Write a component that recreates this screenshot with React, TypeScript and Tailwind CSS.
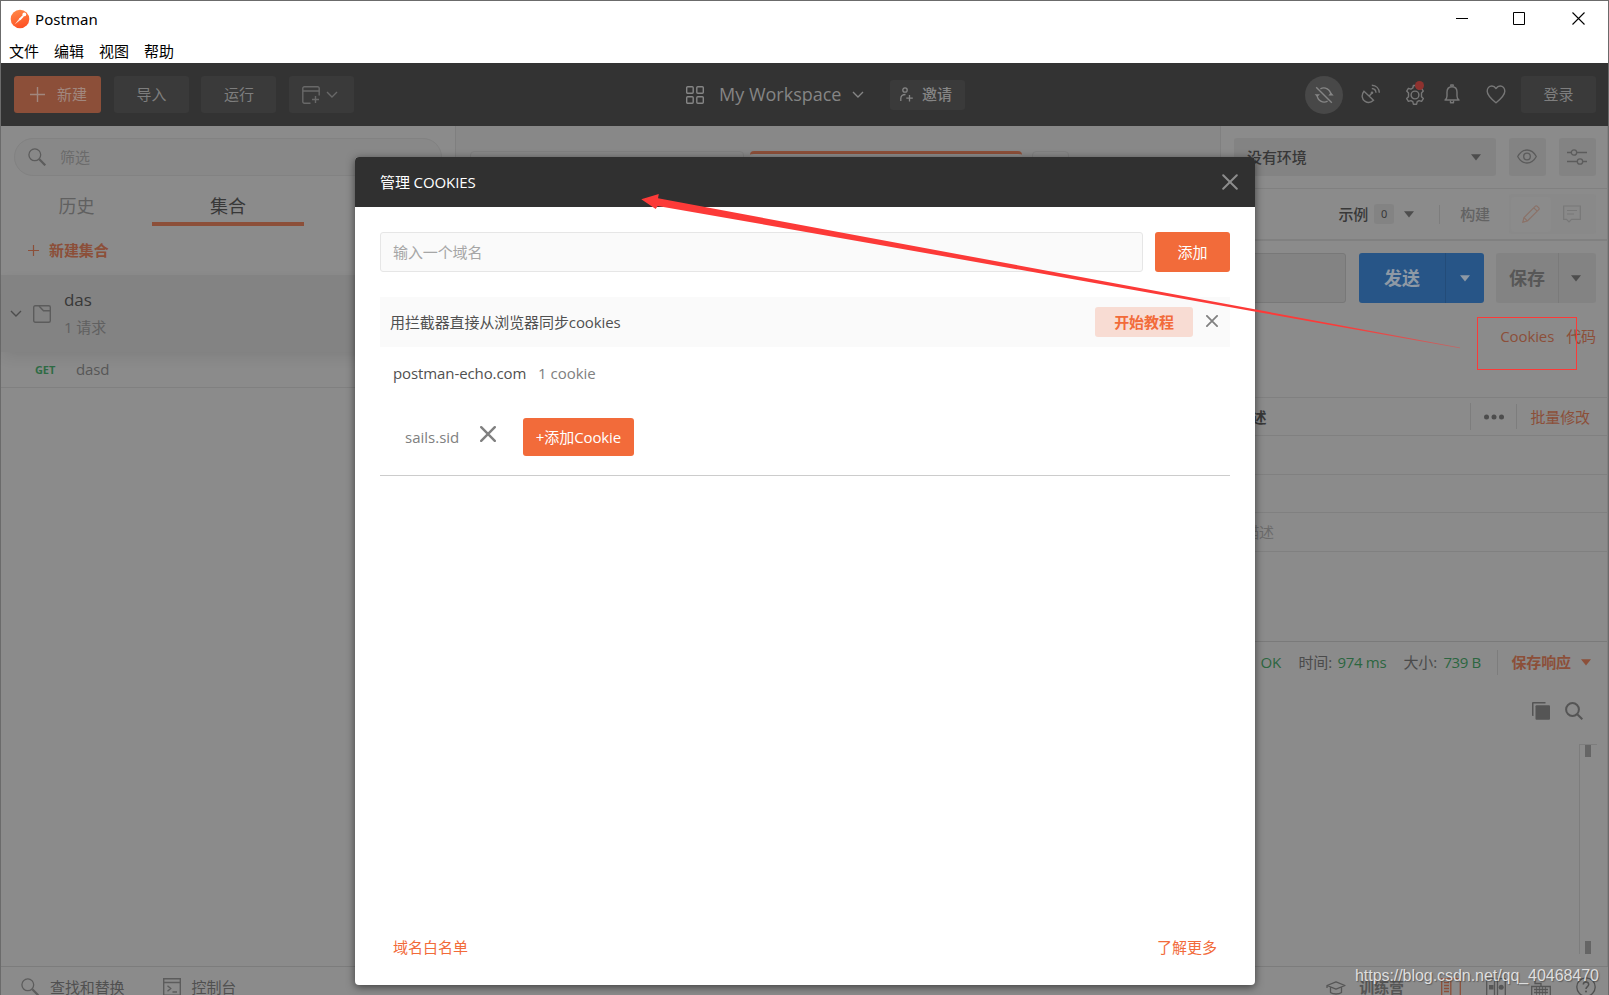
import React from "react";

const FONT = "font-['Open_Sans','Noto_Sans_CJK_SC',sans-serif] tracking-[-0.1px]";

function Caret({ className = "" }: { className?: string }) {
  return (
    <svg width="10" height="7" viewBox="0 0 10 7" className={`shrink-0 ${className}`} fill="currentColor">
      <path d="M0 0.3h10L5 6.5z" />
    </svg>
  );
}

function Chevron({ className = "" }: { className?: string }) {
  return (
    <svg width="12" height="8" viewBox="0 0 12 8" className={`shrink-0 ${className}`} fill="none" stroke="currentColor" strokeWidth="1.4">
      <path d="M1 1l5 5 5-5" />
    </svg>
  );
}

function Cross({ size, stroke, className = "" }: { size: number; stroke: number; className?: string }) {
  return (
    <svg width={size} height={size} viewBox="0 0 16 16" className={`shrink-0 ${className}`} fill="none" stroke="currentColor" strokeWidth={stroke} strokeLinecap="round">
      <path d="M1.2 1.2l13.6 13.6M14.8 1.2L1.2 14.8" />
    </svg>
  );
}

function TitleBar() {
  return (
    <div className="flex h-9 shrink-0 items-center bg-white">
      <svg width="20" height="20" viewBox="0 0 20 20" className="ml-[9px] shrink-0">
        <defs>
          <linearGradient id="logo" x1="0" y1="0" x2="0.3" y2="1">
            <stop offset="0" stopColor="#ff8c4a" />
            <stop offset="1" stopColor="#ff5426" />
          </linearGradient>
        </defs>
        <circle cx="10" cy="10" r="9.3" fill="url(#logo)" />
        <path d="M4.6 15.5l5-6.3 1.4 1.4z" fill="#fff" opacity="0.85" />
        <path d="M9 9.8l3.6-3.6 1.3 1.3-3.5 3.7z" fill="#fff" />
        <circle cx="14.3" cy="5.4" r="1.9" fill="#fff" />
      </svg>
      <span className="ml-[5px] font-['Noto_Sans',sans-serif] text-[15px] leading-5 tracking-[0.05px] text-black">Postman</span>
      <div className="ml-auto mr-[23px] flex items-center gap-[45px] pb-px">
        <svg width="12" height="13" viewBox="0 0 12 13"><path d="M0 6.5h12" stroke="#000" /></svg>
        <svg width="13" height="13" viewBox="0 0 13 13" className="mr-[1px]"><path d="M.5.5h11v12H.5z" fill="none" stroke="#000" /></svg>
        <svg width="13" height="13" viewBox="0 0 13 13"><path d="M.5.5l12 12M12.5.5l-12 12" fill="none" stroke="#000" strokeWidth="1.1" /></svg>
      </div>
    </div>
  );
}

function MenuBar() {
  return (
    <div className="flex h-[26px] shrink-0 items-center gap-[15px] bg-white pl-2 pt-px text-[15px] leading-5 tracking-normal text-black">
      <span>文件</span>
      <span>编辑</span>
      <span>视图</span>
      <span>帮助</span>
    </div>
  );
}

function HeaderIcons() {
  return (
    <>
      <div className="flex size-[38px] items-center justify-center rounded-full bg-[#484848] text-[#858585]">
        <svg width="20" height="18" viewBox="0 0 20 18" fill="none" stroke="currentColor" strokeWidth="1.4">
          <path d="M6.4 2.8A7 7 0 0 1 16.8 8.6M13.6 15.2A7 7 0 0 1 3.2 9.2" />
          <path d="M.6 8.2h5.4L3.3 11z M14.3 9.4h5.4L17 6.4z" fill="currentColor" stroke="none" />
          <path d="M2.2 1.2l15.6 15.6" />
        </svg>
      </div>
      <svg width="20" height="20" viewBox="0 0 20 20" className="mb-px ml-[18px] text-[#777]" fill="none" stroke="currentColor" strokeWidth="1.4">
        <path d="M3 7.2c-3 3.800-2 8 .8 10 3 2 6.500 1.300 8.700-.9z" />
        <path d="M8 12.200l3-3.200" />
        <circle cx="11" cy="8.800" r="1.300" fill="currentColor" stroke="none" />
        <path d="M10.800 4.500c2.500.1 4 1.800 4.200 4.300M10.800 1.200c4.500.1 7.300 3.300 7.500 7.500" />
      </svg>
      <div className="relative mb-px ml-6">
        <svg width="20" height="21" viewBox="0 0 20 21" className="text-[#777]" fill="none" stroke="currentColor" strokeWidth="1.400" strokeLinejoin="round">
          <circle cx="10" cy="11" r="3.900" />
          <path d="M8.400 1.500h3.200l.6 2.500 1.900 1.100 2.500-.8 1.700 2.800-1.800 1.900v3.700l1.800 1.900-1.700 2.800-2.500-.8-1.900 1.100-.6 2.500H8.400l-.6-2.500-1.900-1.100-2.500.8-1.700-2.800 1.800-1.900V9L1.700 7.100l1.700-2.800 2.500.8L7.800 4z" />
        </svg>
        <span className="absolute -top-[3px] right-[1px] size-[9px] rounded-full bg-[#8e322f]" />
      </div>
      <svg width="16" height="20" viewBox="0 0 16 20" className="mb-px ml-[19px] text-[#777]" fill="none" stroke="currentColor" strokeWidth="1.400" strokeLinejoin="round">
        <path d="M1 16c1.400-1 2-2 2-4V8c0-3.200 2-5.300 5-5.300S13 4.800 13 8v4c0 2 .6 3 2 4z" />
        <path d="M6.800 2.500V1h2.400v1.500M6.500 16.500v2.300h3v-2.300" />
      </svg>
      <svg width="20" height="19" viewBox="0 0 20 19" className="mb-px ml-[26px] text-[#777]" fill="none" stroke="currentColor" strokeWidth="1.400" strokeLinejoin="round">
        <path d="M10 17.800C6.500 15 1.200 10.800 1.200 6.300 1.200 3.300 3.200 1 5.800 1 7.700 1 9 2 10 3.500 11 2 12.300 1 14.200 1c2.600 0 4.600 2.300 4.600 5.300 0 4.500-5.300 8.700-8.800 11.500z" />
      </svg>
    </>
  );
}

function Header() {
  return (
    <div className="grid h-[63px] shrink-0 grid-cols-[1fr_auto_1fr] items-center bg-[#333] pl-[13px] pr-3 text-[15px] text-[#7e7e7e]">
      <div className="flex items-center">
        <div className="flex h-[37px] w-[87px] items-center rounded-[3px] bg-[#8c4f39] pl-4 text-[#a1877e]">
          <svg width="15" height="15" viewBox="0 0 15 15" stroke="currentColor" strokeWidth="1.4"><path d="M7.500 0v15M0 7.500h15" /></svg>
          <span className="ml-3">新建</span>
        </div>
        <div className="ml-[13px] flex h-[37px] w-[75px] items-center justify-center rounded-[3px] bg-[#3a3a3a]">导入</div>
        <div className="ml-3 flex h-[37px] w-[75px] items-center justify-center rounded-[3px] bg-[#3a3a3a] pl-px">运行</div>
        <div className="ml-[13px] flex h-[37px] w-[65px] items-center rounded-[3px] bg-[#3a3a3a] pl-[13px] text-[#686868]">
          <svg width="18" height="18" viewBox="0 0 18 18" fill="none" stroke="currentColor" strokeWidth="1.400">
            <path d="M8.500 17.200H2.300A1.500 1.500 0 0 1 .8 15.700V2.300A1.500 1.500 0 0 1 2.300.8h13.400a1.500 1.500 0 0 1 1.500 1.500v7.200M.8 5h16.400M13.500 10v7M10 13.500h7" />
          </svg>
          <Chevron className="ml-1.5" />
        </div>
      </div>
      <div className="ml-[41px] flex items-center text-[#858585]">
        <svg width="18" height="18" viewBox="0 0 18 18" fill="none" stroke="currentColor" strokeWidth="1.400">
          <rect x=".7" y=".7" width="6.500" height="6.500" rx="1" />
          <rect x="10.800" y=".7" width="6.500" height="6.500" rx="1" />
          <rect x=".7" y="10.800" width="6.500" height="6.500" rx="1" />
          <rect x="10.800" y="10.800" width="6.500" height="6.500" rx="1" />
        </svg>
        <span className="ml-[15px] w-[121px] whitespace-nowrap text-[18px] tracking-normal">My Workspace</span>
        <Chevron className="ml-[12px]" />
        <div className="ml-[26px] flex h-[30px] w-[75px] items-center rounded-[3px] bg-[#3a3a3a] pl-[10px]">
          <svg width="13" height="15" viewBox="0 0 13 15" fill="none" stroke="currentColor" strokeWidth="1.300">
            <circle cx="5" cy="3" r="2.200" />
            <path d="M.8 14v-2.500C.8 9 2.500 7.500 5.500 7.500M9.500 8v6.500M6.300 11.200h6.500" />
          </svg>
          <span className="ml-[9px] font-medium">邀请</span>
        </div>
      </div>
      <div className="flex items-center justify-end">
        <HeaderIcons />
        <div className="ml-[15px] flex h-[37px] w-[75px] items-center justify-center rounded-[3px] bg-[#3a3a3a]">登录</div>
      </div>
    </div>
  );
}

function Sidebar() {
  return (
    <div className="flex w-[455px] shrink-0 flex-col border-r border-[#7f7f7f]">
      <div className="ml-[13px] mt-3 flex h-[38px] w-[428px] shrink-0 items-center rounded-full border border-[#828282] bg-[#888] pl-[13px]">
        <svg width="18" height="18" viewBox="0 0 18 18" fill="none" stroke="#5c5c5c">
          <circle cx="6.800" cy="6.800" r="5.900" strokeWidth="1.300" />
          <path d="M11.300 11.300l6 6" strokeWidth="2.200" />
        </svg>
        <span className="ml-[14px] text-[15px] text-[#6b6b6b]">筛选</span>
      </div>
      <div className="flex h-[50px] shrink-0 text-center text-[18px] leading-[60px]">
        <div className="w-[151px] text-[#606060]">历史</div>
        <div className="w-[152px] border-b-4 border-[#8c4f39] text-[#383838]">集合</div>
      </div>
      <div className="flex h-[49px] shrink-0 items-center pl-[27px] text-[15px] font-bold text-[#8c4f39]">
        <svg width="11" height="11" viewBox="0 0 11 11" stroke="currentColor" strokeWidth="1.200"><path d="M5.500 0v11M0 5.500h11" /></svg>
        <span className="ml-[10px]">新建集合</span>
      </div>
      <div className="relative z-10 flex h-[77px] shrink-0 items-center bg-[#838383] pl-[9px] shadow-[0_6px_14px_-2px_rgba(0,0,0,0.09)]">
        <Chevron className="text-[#4d4d4d]" />
        <svg width="18" height="18" viewBox="0 0 18 18" className="ml-[11px]" fill="none" stroke="#5c5c5c" strokeWidth="1.400">
          <rect x=".7" y=".7" width="16.600" height="16.600" rx="1.500" />
          <path d="M6 1l4.500 4.800h6.500" />
        </svg>
        <div className="ml-[13px] flex flex-col text-[#383838]">
          <span className="text-[17px] leading-[26px]">das</span>
          <span className="text-[15px] leading-[28px] text-[#606060]">1 请求</span>
        </div>
      </div>
      <div className="flex h-9 shrink-0 items-center border-b border-[#808080] pl-[34px]">
        <span className="w-[41px] pt-px text-[11px] font-bold text-[#2f6b45]">GET</span>
        <span className="text-[15px] text-[#575757]">dasd</span>
      </div>
    </div>
  );
}

function TopTabs() {
  return (
    <div className="flex h-[63px] shrink-0 border-b border-[#808080]">
      <div className="flex w-[764px] shrink-0 items-start gap-[6px] bg-[#888] pl-[14px] pt-[25px]">
        <div className="h-[37px] w-[274px] rounded-t border border-[#808080]" />
        <div className="h-[37px] w-[272px] rounded-t border-t-[3px] border-[#8c4f39] bg-[#8b8b8b]" />
        <div className="ml-[4px] h-[37px] w-[37px] rounded-t border border-[#808080]" />
      </div>
      <div className="flex flex-1 items-start border-l border-[#808080] pl-[13px] pt-3">
        <div className="flex h-[38px] w-[262px] items-center rounded-[3px] bg-[#838383] pl-[13px] pr-[15px] text-[15px] font-medium text-[#383838]">
          <span>没有环境</span>
          <Caret className="ml-auto text-[#4d4d4d]" />
        </div>
        <div className="ml-[13px] flex h-[38px] w-[37px] items-center justify-center rounded-[3px] bg-[#838383] pb-px pr-px text-[#5c5c5c]">
          <svg width="20" height="15" viewBox="0 0 20 15" fill="none" stroke="currentColor" strokeWidth="1.300">
            <path d="M.7 7.500C3 3.200 6.300 1 10 1s7 2.200 9.300 6.500C17 11.800 13.700 14 10 14S3 11.800.7 7.500z" />
            <circle cx="10" cy="7.500" r="3.300" />
          </svg>
        </div>
        <div className="ml-[13px] flex h-[38px] w-[37px] items-center justify-center rounded-[3px] bg-[#838383] pr-px text-[#5c5c5c]">
          <svg width="20" height="16" viewBox="0 0 20 16" fill="none" stroke="currentColor" strokeWidth="1.300">
            <path d="M0 3.500h4.200M9.800 3.500H20M0 12.500h10.200M15.800 12.500H20" />
            <circle cx="7" cy="3.500" r="2.700" />
            <circle cx="13" cy="12.500" r="2.700" />
          </svg>
        </div>
      </div>
    </div>
  );
}

function RequestArea() {
  return (
    <>
      <div className="flex h-[52px] shrink-0 items-center justify-end border-b-2 border-[#808080] pr-[11px] text-[15px]">
        <span className="font-medium text-[#383838]">示例</span>
        <span className="ml-[6px] flex h-5 w-5 items-center justify-center rounded-[3px] bg-[#838383] font-['Noto_Sans',sans-serif] text-[11px] text-[#383838]">0</span>
        <Caret className="ml-[10px] text-[#4d4d4d]" />
        <span className="ml-[25px] h-[19px] w-px bg-[#7d7d7d]" />
        <span className="ml-5 pt-px font-medium text-[#636363]">构建</span>
        <div className="ml-[19px] flex h-[40px] w-[87px] items-center rounded-[3px] bg-[#898989] pl-[2px]">
          <div className="flex h-[35px] w-[40px] items-center justify-center rounded-[3px] bg-[#8b8b8b] text-[#8b7268]">
            <svg width="18" height="18" viewBox="0 0 18 18" fill="none" stroke="currentColor" strokeWidth="1.200"><path d="M.8 17.200l1.200-4.600L13.400 1.200c.5-.5 1.200-.5 1.700 0l1.700 1.700c.5.5.5 1.200 0 1.700L5.400 16zM11.800 2.800l3.400 3.400M2 12.600L5.400 16" /></svg>
          </div>
          <svg width="18" height="18" viewBox="0 0 18 18" className="ml-3" fill="none" stroke="#787878" strokeWidth="1.200"><path d="M.7 1h16.600v13.300H8.500L6 16.800l-2.500-2.500H.7zM4 5.500h10M4 9h7" /></svg>
        </div>
      </div>

      <div className="flex h-[75px] shrink-0 items-start pl-[14px] pr-[11px] pt-3">
        <div className="h-[50px] w-[876px] rounded-[3px] border border-[#787878] bg-[#838383]" />
        <div className="ml-[13px] flex h-[50px] w-[125px] rounded-[3px] bg-[#275587] text-[18px] font-bold text-[#8e99a5]">
          <span className="flex w-[86px] items-center justify-center pt-px">发送</span>
          <span className="flex flex-1 items-center justify-center border-l border-[#234c79] pr-px"><Caret /></span>
        </div>
        <div className="ml-[12px] flex h-[50px] w-[100px] rounded-[3px] bg-[#838383] text-[18px] font-bold text-[#575757]">
          <span className="flex w-[62px] items-center justify-center pt-px">保存</span>
          <span className="flex flex-1 items-center justify-center border-l border-[#7a7a7a] pr-1"><Caret className="text-[#4d4d4d]" /></span>
        </div>
      </div>

      <div className="flex h-[82px] shrink-0 items-start justify-end border-b border-[#808080] pr-[11px] pt-[9px] text-[15px] text-[#8c4f39]">
        <span className="w-[66px]">Cookies</span>
        <span>代码</span>
      </div>

      <div className="flex h-[38px] shrink-0 items-center justify-end border-b border-[#808080] pr-[17px] text-[15px]">
        <span className="mr-[204px] pt-px font-bold text-[#383838]">描述</span>
        <span className="h-[27px] w-px bg-[#7d7d7d]" />
        <svg width="20" height="6" viewBox="0 0 20 6" className="ml-[13px]" fill="#4d4d4d"><circle cx="2.500" cy="3" r="2.500" /><circle cx="10" cy="3" r="2.500" /><circle cx="17.500" cy="3" r="2.500" /></svg>
        <span className="ml-3 h-[25px] w-px bg-[#7d7d7d]" />
        <span className="ml-[13px] pt-0.5 text-[#8c4f39]">批量修改</span>
      </div>
      <div className="h-[39px] shrink-0 border-b border-[#808080]" />
      <div className="h-[38px] shrink-0 border-b border-[#808080]" />
      <div className="flex h-[39px] shrink-0 items-center justify-end border-b border-[#808080] pr-[333px] text-[15px] text-[#6b6b6b]">描述</div>
      <div className="h-[89px] shrink-0" />

      <div className="flex h-[41px] shrink-0 items-center justify-end border-t border-[#7a7a7a] pr-[16px] text-[15px] text-[#4a4a4a]">
        <span className="w-[38px] text-[#2c6640]">OK</span>
        <span className="w-[39px]">时间:</span>
        <span className="w-[66px] tracking-[-0.3px] text-[#2c6640]">974 ms</span>
        <span className="w-[40px]">大小:</span>
        <span className="w-[54px] tracking-[-0.4px] text-[#2c6640]">739 B</span>
        <span className="h-[25px] w-px bg-[#7d7d7d]" />
        <span className="ml-[13px] font-bold text-[#8c4f39]">保存响应</span>
        <Caret className="ml-[10px] text-[#8c4f39]" />
      </div>

      <div className="flex h-[62px] shrink-0 justify-end gap-[15px] pr-[24px] pt-5 text-[#555]">
        <svg width="18" height="18" viewBox="0 0 18 18" fill="currentColor"><path d="M13.500 0v1.500H1.500V14H.8a.8.800 0 0 1-.8-.8V1A1 1 0 0 1 1 0z" /><rect x="3.500" y="3.300" width="14.500" height="14.500" rx="1" /></svg>
        <svg width="18" height="18" viewBox="0 0 18 18" fill="none" stroke="currentColor" strokeWidth="2"><circle cx="7.500" cy="7.500" r="6.400" /><path d="M12 12l5.300 5.300" /></svg>
      </div>

      <div className="ml-auto mr-[10px] flex h-[210px] w-[18px] shrink-0 flex-col items-start justify-between border-l border-t border-[#7d7d7d] pl-[5px]">
        <span className="h-3 w-1.5 bg-[#656565]" />
        <span className="h-[13px] w-1.5 bg-[#656565]" />
      </div>
    </>
  );
}

function StatusBar() {
  return (
    <div className="flex h-[29px] shrink-0 items-start overflow-hidden border-t border-[#7c7c7c] pl-5 pr-3 text-[15px] text-[#505050]">
      <svg width="18" height="18" viewBox="0 0 18 18" className="mt-[11px] shrink-0" fill="none" stroke="#5c5c5c"><circle cx="6.800" cy="6.800" r="5.900" strokeWidth="1.300" /><path d="M11.300 11.300l6 6" strokeWidth="2.200" /></svg>
      <span className="ml-[11px] mt-[9px] leading-[22px]">查找和替换</span>
      <svg width="18" height="18" viewBox="0 0 18 18" className="ml-[38px] mt-[11px] shrink-0" fill="none" stroke="#5c5c5c" strokeWidth="1.400"><path d="M.7.7h16.600v16.600H.7zM.7 4.500h16.600M4.500 7.800l3.200 2.700-3.200 2.700M9.500 14h4.500" /></svg>
      <span className="ml-[11px] mt-[9px] leading-[22px]">控制台</span>
      <div className="ml-auto flex items-start">
        <svg width="20" height="14" viewBox="0 0 20 14" className="mt-[14px]" fill="none" stroke="#565656" strokeWidth="1.300" strokeLinejoin="round"><path d="M10 .8L1 4.500 10 8.200l9-3.700zM4.500 6v5.500c2.500 2 8.500 2 11 0V6M1 4.500V7" /></svg>
        <span className="ml-[13px] mt-[9px] font-bold leading-[22px] text-[#555]">训练营</span>
        <svg width="20" height="20" viewBox="0 0 20 20" className="ml-[37px] mt-[11px]" fill="none" stroke="#8c4f39" strokeWidth="1.300"><path d="M.7.7h18.600v18.600H.7zM9.800.7v18.600M3 4.500h5M3 7.500h5M3 10.500h5M3 13.500h5" /></svg>
        <svg width="20" height="20" viewBox="0 0 20 20" className="ml-[25px] mt-[11px]" fill="none" stroke="#565656" strokeWidth="1.300"><path d="M.7.7h7.800v18.600H.7zM11.500.7h7.800v18.600h-7.800z" /><path d="M3 7h4.500v4.500H3z" fill="#565656" stroke="none" /><circle cx="15.200" cy="9.300" r="2.500" fill="#565656" stroke="none" /></svg>
        <svg width="20" height="20" viewBox="0 0 20 20" className="ml-[25px] mt-[11px]" fill="none" stroke="#565656" strokeWidth="1.300"><path d="M.7 8.500h18.600v11H.7zM10 8V5.500H4V2M3 11.500h14M3 14.500h14" /><path d="M5.500 9v10M8.500 9v10M11.500 9v10M14.500 9v10" strokeWidth=".8" /></svg>
        <svg width="20" height="20" viewBox="0 0 20 20" className="ml-[25px] mt-[10px]" fill="none" stroke="#505050" strokeWidth="1.300"><circle cx="10" cy="10" r="9.200" /><path d="M7.300 7.500c0-3.500 5.400-3.500 5.400 0 0 2-2.700 2.200-2.700 4.500" strokeWidth="1.500" /><circle cx="10" cy="14.500" r="1" fill="#505050" stroke="none" /></svg>
      </div>
    </div>
  );
}

function CookiesModal() {
  return (
    <div className="absolute left-[355px] top-[157px] z-20 flex h-[828px] w-[900px] flex-col overflow-hidden rounded-[4px] bg-white text-[15px] shadow-[0_2px_8px_rgba(0,0,0,0.55)]">
      <div className="flex h-[50px] shrink-0 items-center justify-between bg-[#303030] pl-[25px] pr-[17px] text-white">
        <span>管理 COOKIES</span>
        <Cross size={16} stroke={2} className="text-[#8c8c8c]" />
      </div>
      <div className="flex flex-1 flex-col px-[25px]">
        <div className="mt-[25px] flex gap-3">
          <div className="flex h-10 flex-1 items-center rounded-[3px] border border-[#e6e6e6] bg-[#fafafa] pl-3 text-[#a6a6a6]">输入一个域名</div>
          <div className="flex h-10 w-[75px] items-center justify-center rounded-[3px] bg-[#f26b3a] text-white">添加</div>
        </div>
        <div className="mt-[25px] flex h-[50px] items-center bg-[#fafafa] pl-[10px] pr-[12px] text-[#505050]">
          <span>用拦截器直接从浏览器同步cookies</span>
          <span className="ml-auto flex h-[30px] w-[98px] items-center justify-center rounded-[3px] bg-[#f8dcd3] font-bold text-[#f26b3a]">开始教程</span>
          <Cross size={12} stroke={2.4} className="mb-[3px] ml-[13px] text-[#808080]" />
        </div>
        <div className="flex h-[53px] items-center pl-[13px] text-[#505050]">
          <span className="w-[145px]">postman-echo.com</span>
          <span className="tracking-normal text-[#808080]">1 cookie</span>
        </div>
        <div className="flex h-[76px] items-start border-b border-[#ccc] pl-[25px] pt-[18px] text-[#808080]">
          <span className="w-[75px] leading-[38px] tracking-normal">sails.sid</span>
          <Cross size={16} stroke={2.4} className="mt-2" />
          <span className="ml-[27px] flex h-[38px] w-[111px] items-center justify-center rounded-[3px] bg-[#f26b3a] text-white">+添加Cookie</span>
        </div>
        <div className="mt-auto flex justify-between px-[13px] pb-[27px] leading-[22px] tracking-normal text-[#f26b3a]">
          <span>域名白名单</span>
          <span>了解更多</span>
        </div>
      </div>
    </div>
  );
}

function Annotations() {
  return (
    <>
      <svg width="830" height="165" viewBox="640 190 830 165" className="absolute left-[640px] top-[190px] z-30">
        <defs>
          <linearGradient id="tail" gradientUnits="userSpaceOnUse" x1="1340" y1="0" x2="1462" y2="0">
            <stop offset="0" stopColor="#fc3a38" />
            <stop offset="1" stopColor="#fc3a38" stopOpacity="0.450" />
          </linearGradient>
        </defs>
        <path d="M641.300 199.300L658.800 194l-.8 4.300L860 236l400 74.300 200 37.200v.7l-200-35.800-400-71L657.700 206l-2 2.900z" fill="url(#tail)" />
      </svg>
      <div className="absolute left-[1477px] top-[317px] z-30 h-[53px] w-[100px] border border-[#fc3a38]" />
      <span className="absolute left-[1355px] top-[965px] z-30 whitespace-nowrap font-['Liberation_Sans',sans-serif] text-[16px] leading-[22px] tracking-[-0.05px] text-[#dedede] [text-shadow:1px_1px_1px_rgba(60,60,60,0.6)]">
        https://blog.csdn.net/qq_40468470
      </span>
    </>
  );
}

export default function App() {
  return (
    <div className={`relative h-[995px] w-[1609px] overflow-hidden bg-[#8b8b8b] ${FONT}`}>
      <div className="flex h-full w-full flex-col border-x border-t border-[#6b6b6b]">
        <TitleBar />
        <MenuBar />
        <Header />
        <div className="flex min-h-0 flex-1 border-r border-[#808080]">
          <Sidebar />
          <div className="flex min-w-0 flex-1 flex-col">
            <TopTabs />
            <RequestArea />
          </div>
        </div>
        <StatusBar />
      </div>
      <CookiesModal />
      <Annotations />
    </div>
  );
}
